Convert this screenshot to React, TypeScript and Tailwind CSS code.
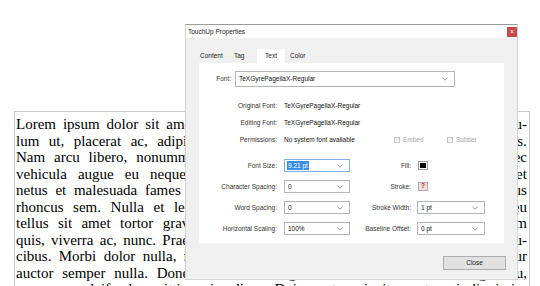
import React from "react";

const lines = [
  "Lorem ipsum dolor sit amet, consectetuer adipiscing elit. Ut purus elit, vestibu-",
  "lum ut, placerat ac, adipiscing vitae, felis. Curabitur dictum gravida mauris.",
  "Nam arcu libero, nonummy eget, consectetuer id, vulputate a, magna. Donec",
  "vehicula augue eu neque. Pellentesque habitant morbi tristique senectus et",
  "netus et malesuada fames ac turpis egestas. Mauris ut leo. Cras viverra metus",
  "rhoncus sem. Nulla et lectus vestibulum urna fringilla ultrices. Phasellus eu",
  "tellus sit amet tortor gravida placerat. Integer sapien est, iaculis in, pretium",
  "quis, viverra ac, nunc. Praesent eget sem vel leo ultrices bibendum. Aenean fau-",
  "cibus. Morbi dolor nulla, malesuada eu, pulvinar at, mollis ac, nulla. Curabitur",
  "auctor semper nulla. Donec varius orci eget risus. Duis nibh mi, congue eu,",
  "accumsan eleifend, sagittis quis, diam. Duis eget orci sit amet orci dignissim",
];

const ui = { fontFamily: '"Liberation Sans", Arial, sans-serif' };

function Chevron() {
  return (
    <svg width="6" height="4" viewBox="0 0 6 4" className="shrink-0">
      <path d="M0.5 0.8 L3 3.2 L5.5 0.8" fill="none" stroke="#7a7a7a" strokeWidth="0.8" />
    </svg>
  );
}

function Combo({ value, w, focused = false }: { value: string; w: string; focused?: boolean }) {
  return (
    <div
      className={`${w} h-[13px] flex items-center justify-between bg-white border pl-[2px] pr-[6px] ${
        focused ? "border-[#7fb0e3]" : "border-[#b5b5b5]"
      }`}
    >
      {focused ? (
        <span className="bg-[#3a8ee6] text-white px-[1px] leading-[9px]">{value}</span>
      ) : (
        <span className="text-[#111] pl-[1px]">{value}</span>
      )}
      <Chevron />
    </div>
  );
}

function Check({ label }: { label: string }) {
  return (
    <div className="flex items-center gap-[3px] text-[#a6a6a6]">
      <div className="w-[6px] h-[6px] border border-[#c4c4c4] bg-white flex items-center justify-center">
        <svg width="5" height="5" viewBox="0 0 5 5">
          <path d="M0.6 2.6 L1.9 3.9 L4.4 0.9" fill="none" stroke="#b0b0b0" strokeWidth="0.7" />
        </svg>
      </div>
      <span>{label}</span>
    </div>
  );
}

function InfoRow({ label, value, children }: { label: string; value: string; children?: React.ReactNode }) {
  return (
    <div className="h-[17px] flex items-center">
      <div className="w-[78px] text-right text-[#333]">{label}</div>
      <div className="ml-[7px] w-[110px] text-[#111]">{value}</div>
      {children}
    </div>
  );
}

function FieldRow({
  label,
  value,
  focused,
  rlabel,
  right,
}: {
  label: string;
  value: string;
  focused?: boolean;
  rlabel: string;
  right: React.ReactNode;
}) {
  return (
    <div className="h-[13px] flex items-center">
      <div className="w-[78px] text-right text-[#333]">{label}</div>
      <div className="ml-[7px]">
        <Combo value={value} w="w-[66px]" focused={focused} />
      </div>
      <div className="w-[61px] text-right text-[#333]">{rlabel}</div>
      <div className="ml-[6px]">{right}</div>
    </div>
  );
}

export default function App() {
  return (
    <div className="relative w-[540px] h-[286px] overflow-hidden bg-white">
      {/* document page */}
      <div className="pt-[111px] pl-[14px]">
        <div
          className="w-[516px] border-l border-t border-r border-[#c9c9c9] pl-[1px] pr-[2px] pt-[4px] text-[15px] text-black"
          style={{ fontFamily: '"Liberation Serif", "Times New Roman", serif' }}
        >
          {lines.map((l, i) => (
            <div key={i} className="flex justify-between h-[16.5px] leading-[16.5px] whitespace-nowrap">
              {l.split(" ").map((w, j) => (
                <span key={j}>{w}</span>
              ))}
            </div>
          ))}
        </div>
      </div>

      {/* dialog window */}
      <div
        className="absolute left-[185px] top-[24px] w-[333px] h-[256px] bg-[#f0f0f0] border-t border-[#9a9a9a] border-l border-r border-b border-l-[#d4d4d4] border-r-[#d4d4d4] border-b-[#d4d4d4] text-[6.5px] flex flex-col"
        style={ui}
      >
        <div className="h-[13px] bg-white flex items-center justify-between pl-[2px]">
          <span className="text-[#222]">TouchUp Properties</span>
          <div className="w-[10px] h-[10px] bg-[#c9494b] flex items-center justify-center text-white text-[7px] leading-none">
            ×
          </div>
        </div>

        <div className="pl-[13px] pr-[12px] pt-[11px]">
          {/* tabs */}
          <div className="flex h-[14px] items-center text-[#222]">
            <div className="w-[35px] pl-[1px]">Content</div>
            <div className="w-[23px]">Tag</div>
            <div className="w-[28px] h-[14px] bg-white flex items-center justify-center pb-[1px]">Text</div>
            <div className="pl-[5px]">Color</div>
          </div>

          {/* panel */}
          <div className="w-[305px] h-[180px] bg-white pt-[8px]">
            <div className="flex items-center h-[16px]">
              <div className="w-[32px] text-right text-[#333]">Font:</div>
              <div className="ml-[4px] w-[220px] h-[16px] flex items-center justify-between border border-[#b5b5b5] bg-white pl-[3px] pr-[6px]">
                <span className="text-[#111]">TeXGyrePagellaX-Regular</span>
                <Chevron />
              </div>
            </div>

            <div className="mt-[10px]">
              <InfoRow label="Original Font:" value="TeXGyrePagellaX-Regular" />
              <InfoRow label="Editing Font:" value="TeXGyrePagellaX-Regular" />
              <InfoRow label="Permissions:" value="No system font available">
                <div className="w-[53px]">
                  <Check label="Embed" />
                </div>
                <Check label="Subset" />
              </InfoRow>
            </div>

            <div className="mt-[11px] flex flex-col gap-[8px]">
              <FieldRow
                label="Font Size:"
                value="9.21 pt"
                focused
                rlabel="Fill:"
                right={
                  <div className="ml-[1px] w-[10px] h-[9px] border border-[#9a9a9a] bg-white p-[1px]">
                    <div className="w-full h-full bg-black" />
                  </div>
                }
              />
              <FieldRow
                label="Character Spacing:"
                value="0"
                rlabel="Stroke:"
                right={
                  <div className="ml-[1px] w-[10px] h-[9px] border border-[#b9a7a7] bg-[#ecdede] flex items-center justify-center text-[#c0262b] text-[6.5px] font-bold leading-none">
                    ?
                  </div>
                }
              />
              <FieldRow
                label="Word Spacing:"
                value="0"
                rlabel="Stroke Width:"
                right={<Combo value="1 pt" w="w-[68px]" />}
              />
              <FieldRow
                label="Horizontal Scaling:"
                value="100%"
                rlabel="Baseline Offset:"
                right={<Combo value="0 pt" w="w-[68px]" />}
              />
            </div>
          </div>

          <div className="flex justify-end mt-[13px]">
            <div className="w-[63px] h-[14px] bg-[#e1e1e1] border border-[#adadad] flex items-center justify-center text-[#222] mr-[-1px]">
              Close
            </div>
          </div>
        </div>
      </div>
    </div>
  );
}
